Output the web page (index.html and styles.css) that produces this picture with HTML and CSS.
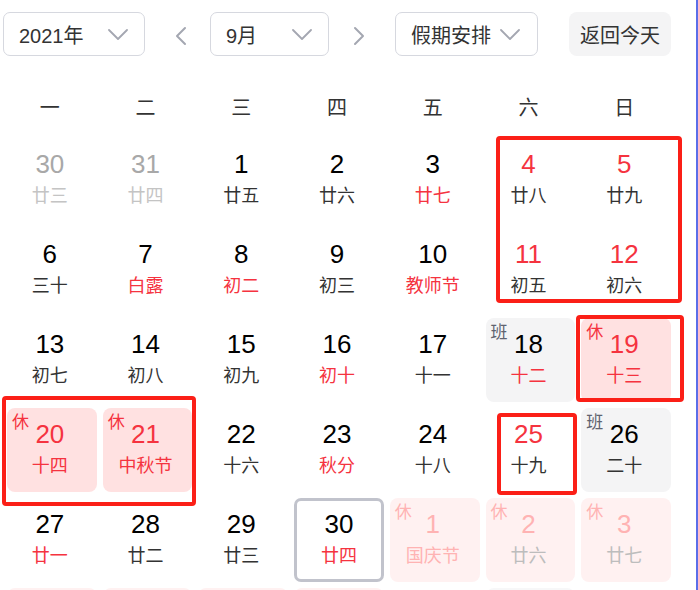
FILE: index.html
```html
<!DOCTYPE html>
<html lang="zh-CN">
<head>
<meta charset="utf-8">
<title>日历</title>
<link rel="stylesheet" href="styles.css">
</head>
<body>
<div class="page">
  <div class="header">
    <div class="select sel-year"><span>2021年</span>
      <svg class="chev" width="20" height="11" viewBox="0 0 20 11"><polyline points="1,1 10,10 19,1"/></svg>
    </div>
    <div class="nav nav-prev">
      <svg width="14" height="20" viewBox="0 0 14 20"><polyline points="11,2 3,10 11,18"/></svg>
    </div>
    <div class="select sel-month"><span>9月</span>
      <svg class="chev" width="20" height="11" viewBox="0 0 20 11"><polyline points="1,1 10,10 19,1"/></svg>
    </div>
    <div class="nav nav-next">
      <svg width="14" height="20" viewBox="0 0 14 20"><polyline points="3,2 11,10 3,18"/></svg>
    </div>
    <div class="select sel-holiday"><span>假期安排</span>
      <svg class="chev" width="20" height="11" viewBox="0 0 20 11"><polyline points="1,1 10,10 19,1"/></svg>
    </div>
    <div class="today-btn">返回今天</div>
  </div>

  <div class="weekdays">
    <div>一</div><div>二</div><div>三</div><div>四</div><div>五</div><div>六</div><div>日</div>
  </div>

  <div class="grid">
    <div class="cell other"><div class="num">30</div><div class="lunar">廿三</div></div>
    <div class="cell other"><div class="num">31</div><div class="lunar">廿四</div></div>
    <div class="cell"><div class="num">1</div><div class="lunar">廿五</div></div>
    <div class="cell"><div class="num">2</div><div class="lunar">廿六</div></div>
    <div class="cell"><div class="num">3</div><div class="lunar red">廿七</div></div>
    <div class="cell weekend"><div class="num">4</div><div class="lunar">廿八</div></div>
    <div class="cell weekend"><div class="num">5</div><div class="lunar">廿九</div></div>

    <div class="cell"><div class="num">6</div><div class="lunar">三十</div></div>
    <div class="cell"><div class="num">7</div><div class="lunar red">白露</div></div>
    <div class="cell"><div class="num">8</div><div class="lunar red">初二</div></div>
    <div class="cell"><div class="num">9</div><div class="lunar">初三</div></div>
    <div class="cell"><div class="num">10</div><div class="lunar red">教师节</div></div>
    <div class="cell weekend"><div class="num">11</div><div class="lunar">初五</div></div>
    <div class="cell weekend"><div class="num">12</div><div class="lunar">初六</div></div>

    <div class="cell"><div class="num">13</div><div class="lunar">初七</div></div>
    <div class="cell"><div class="num">14</div><div class="lunar">初八</div></div>
    <div class="cell"><div class="num">15</div><div class="lunar">初九</div></div>
    <div class="cell"><div class="num">16</div><div class="lunar red">初十</div></div>
    <div class="cell"><div class="num">17</div><div class="lunar">十一</div></div>
    <div class="cell work"><span class="badge">班</span><div class="num">18</div><div class="lunar red">十二</div></div>
    <div class="cell rest"><span class="badge">休</span><div class="num">19</div><div class="lunar">十三</div></div>

    <div class="cell rest"><span class="badge">休</span><div class="num">20</div><div class="lunar">十四</div></div>
    <div class="cell rest"><span class="badge">休</span><div class="num">21</div><div class="lunar">中秋节</div></div>
    <div class="cell"><div class="num">22</div><div class="lunar">十六</div></div>
    <div class="cell"><div class="num">23</div><div class="lunar red">秋分</div></div>
    <div class="cell"><div class="num">24</div><div class="lunar">十八</div></div>
    <div class="cell weekend"><div class="num">25</div><div class="lunar">十九</div></div>
    <div class="cell work"><span class="badge">班</span><div class="num">26</div><div class="lunar">二十</div></div>

    <div class="cell"><div class="num">27</div><div class="lunar red">廿一</div></div>
    <div class="cell"><div class="num">28</div><div class="lunar">廿二</div></div>
    <div class="cell"><div class="num">29</div><div class="lunar">廿三</div></div>
    <div class="cell today"><div class="num">30</div><div class="lunar red">廿四</div></div>
    <div class="cell rest-next"><span class="badge">休</span><div class="num">1</div><div class="lunar fest">国庆节</div></div>
    <div class="cell rest-next"><span class="badge">休</span><div class="num">2</div><div class="lunar">廿六</div></div>
    <div class="cell rest-next"><span class="badge">休</span><div class="num">3</div><div class="lunar">廿七</div></div>

    <div class="cell rest-next"></div>
    <div class="cell rest-next"></div>
    <div class="cell rest-next"></div>
    <div class="cell rest-next"></div>
    <div class="cell"></div>
    <div class="cell work-next"></div>
    <div class="cell"></div>
  </div>

  <div class="mark mark-a"></div>
  <div class="mark mark-b"></div>
  <div class="mark mark-c"></div>
  <div class="mark mark-d"></div>
</div>
</body>
</html>
```
FILE: styles.css
```css
html, body {
  margin: 0;
  padding: 0;
  overflow: hidden;
  background: #fff;
}
body {
  font-family: "Liberation Sans", "Noto Sans CJK SC", sans-serif;
  color: #333;
}
.page {
  position: relative;
  width: 696px;
  height: 590px;
  border-right: 2px solid #5b6ee8;
  overflow: hidden;
}
.header {
  display: flex;
  align-items: center;
  height: 44px;
  padding: 12px 0 0 3px;
}
.select {
  box-sizing: border-box;
  height: 44px;
  border: 1px solid #d6d8df;
  border-radius: 7px;
  display: flex;
  align-items: center;
  justify-content: space-between;
  padding: 0 16px 0 15px;
  font-size: 20px;
  color: #333;
}
.chev polyline, .nav polyline {
  fill: none;
  stroke: #a4a7b1;
  stroke-width: 1.8;
  stroke-linecap: round;
  stroke-linejoin: round;
}
.nav polyline { stroke-width: 2; }
.sel-year { width: 142px; }
.sel-month { width: 119px; }
.sel-holiday { width: 143px; padding-right: 17px; }
.nav {
  box-sizing: border-box;
  height: 44px;
  display: flex;
  align-items: center;
  justify-content: center;
}
.nav-prev { width: 65px; padding-left: 6px; padding-top: 4px; }
.nav-next { width: 66px; padding-right: 6px; padding-top: 4px; }
.today-btn {
  margin-left: 31px;
  width: 102px;
  height: 44px;
  border-radius: 8px;
  background: #f4f4f5;
  display: flex;
  align-items: center;
  justify-content: center;
  font-size: 20px;
  color: #333;
}
.weekdays {
  display: grid;
  grid-template-columns: repeat(7, 1fr);
  column-gap: 6px;
  width: 664px;
  margin: 28px 0 0 5px;
  height: 44px;
  align-items: center;
  text-align: center;
  font-size: 20px;
  color: #333;
}
.grid {
  display: grid;
  grid-template-columns: repeat(7, 1fr);
  grid-auto-rows: 84px;
  gap: 6px;
  width: 664px;
  margin: 10px 0 0 7px;
}
.cell {
  position: relative;
  box-sizing: border-box;
  border-radius: 8px;
  display: flex;
  flex-direction: column;
  align-items: center;
  justify-content: center;
  padding: 0 4px 0 0;
}
.num {
  font-size: 26px;
  line-height: 30px;
  color: #000;
}
.lunar {
  font-size: 18px;
  line-height: 30px;
  margin-top: 2px;
  color: #333;
}
.red { color: #f5333f; }
.other .num { color: #a8a8a8; }
.other .lunar { color: #c4c4c4; }
.weekend .num { color: #f5333f; }
.badge {
  position: absolute;
  left: 5px;
  top: 4px;
  font-size: 17px;
  line-height: 22px;
}
.work { background: #f4f4f5; }
.work .badge { color: #5f6470; }
.rest { background: #ffe1e1; }
.rest .badge, .rest .num, .rest .lunar { color: #f5333f; }
.rest-next { background: #fff1f1; }
.rest-next .badge, .rest-next .num { color: #ffb3b3; }
.rest-next .lunar { color: #bdbdbd; }
.rest-next .lunar.fest { color: #ffb3b3; }
.work-next { background: #f7f7f8; }
.today {
  border: 3px solid #c1c3cc;
  border-radius: 7px;
  padding-right: 0;
}
.mark {
  position: absolute;
  box-sizing: border-box;
  border: 4px solid #fb1f17;
  border-radius: 4px;
}
.mark-a { left: 496px; top: 136px; width: 186px; height: 167px; }
.mark-b { left: 576px; top: 315px; width: 108px; height: 87px; }
.mark-c { left: 2px; top: 396px; width: 194px; height: 110px; }
.mark-d { left: 497px; top: 413px; width: 80px; height: 82px; }
```
